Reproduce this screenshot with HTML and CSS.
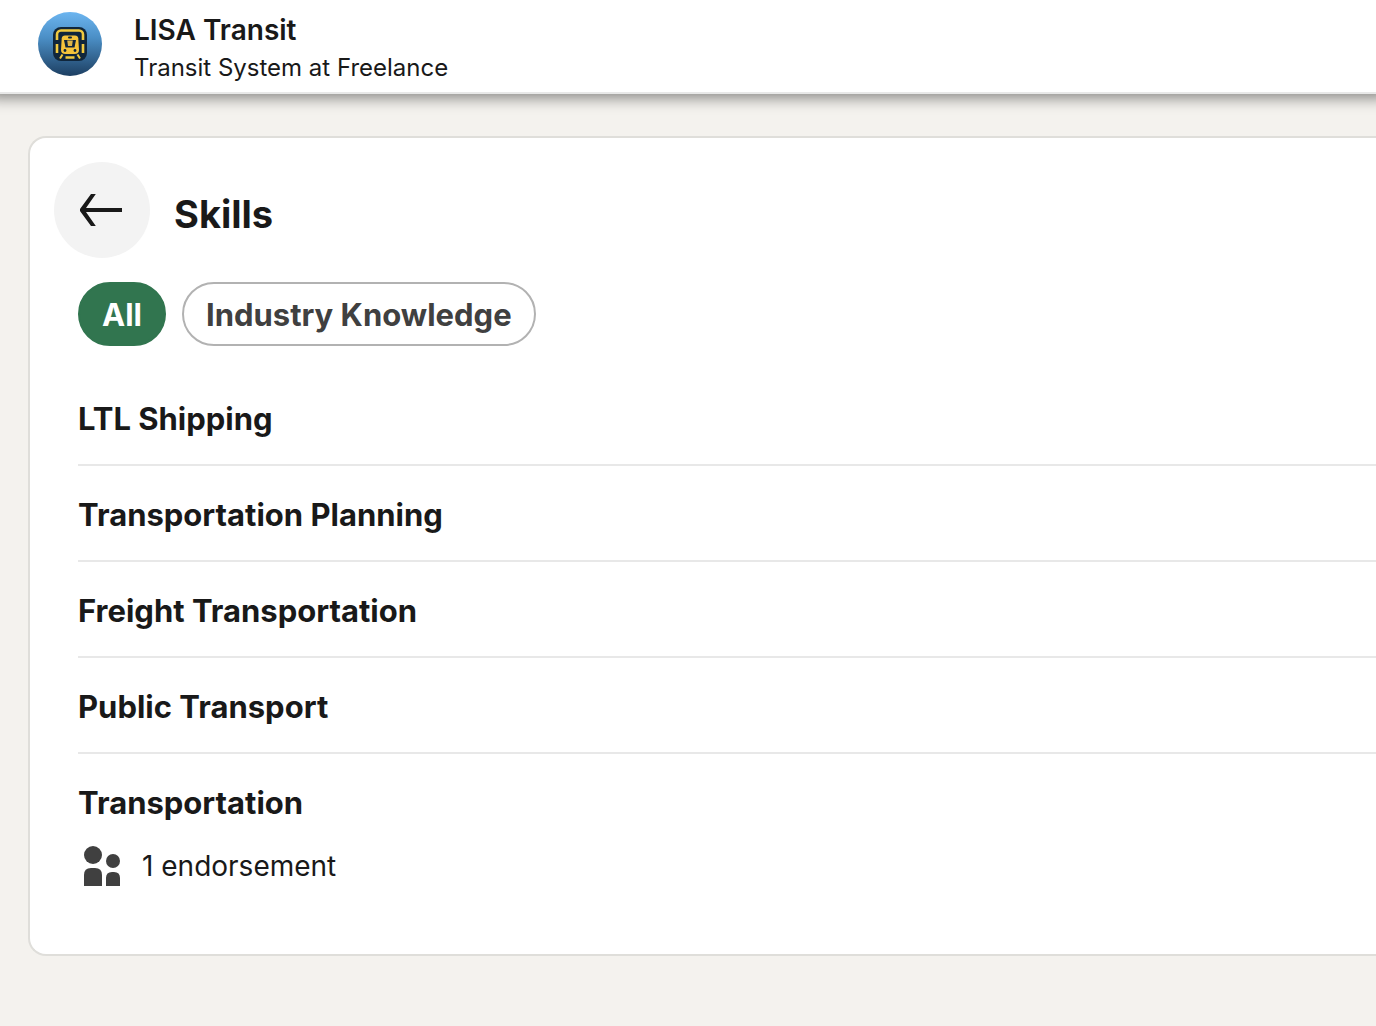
FILE: index.html
```html
<!DOCTYPE html>
<html lang="en">
<head>
<meta charset="utf-8">
<meta name="viewport" content="width=device-width, initial-scale=1">
<title>Skills | LISA Transit</title>
<link rel="stylesheet" href="styles.css">
</head>
<body>
<header class="profile-bar">
  <svg class="avatar" viewBox="0 0 64 64" role="img" aria-label="LISA Transit">
    <defs>
      <linearGradient id="sky" x1="0" y1="0" x2="0" y2="1">
        <stop offset="0" stop-color="#6cb5f0"/>
        <stop offset="0.4" stop-color="#4b8fc6"/>
        <stop offset="1" stop-color="#1d3f62"/>
      </linearGradient>
    </defs>
    <circle cx="32" cy="32" r="32" fill="url(#sky)"/>
    <rect x="15" y="15" width="34" height="34" rx="8" fill="#10263b"/>
    <g fill="none" stroke="#f0ca40" stroke-width="2.600">
      <path d="M19 28v-5.500a4 4 0 0 1 4-4h18a4 4 0 0 1 4 4V28M19 32v9M45 32v9M27.500 45.500h9"/>
      <path d="M24.500 42.500l-2.500 4M39.500 42.500l2.500 4" stroke-width="2"/>
    </g>
    <path d="M27 23.500h10q3 0 3.300 3l.7 11.500q0 4-4.500 4h-9q-4.500 0-4.500-4l.7-11.500q.3-3 3.300-3z" fill="#f5c43a"/>
    <rect x="30" y="24.500" width="4" height="2" rx="1" fill="#10263b"/>
    <path d="M26 28h12l-1.500 7.500h-9z" fill="#10263b"/>
    <path d="M29.200 28.500h5.600l-.8 5.500h-4z" fill="#dcb548"/>
    <circle cx="27" cy="38.500" r="1.400" fill="#10263b"/>
    <circle cx="37" cy="38.500" r="1.400" fill="#10263b"/>
  </svg>
  <div>
    <p class="profile-name">LISA Transit</p>
    <p class="profile-headline">Transit System at Freelance</p>
  </div>
</header>
<main class="page">
  <section class="card">
    <div class="card-head">
      <button class="back" type="button" aria-label="Back">
        <svg width="48" height="48" viewBox="0 0 48 48" fill="#191919" aria-hidden="true"><path d="M44 22v4H8l9.800 14H13L2 25v-2L13 8h4.800L8 22z"/></svg>
      </button>
      <h1 class="title">Skills</h1>
    </div>
    <div class="filters">
      <button class="pill pill-active" type="button" aria-pressed="true">All</button>
      <button class="pill" type="button" aria-pressed="false">Industry Knowledge</button>
    </div>
    <ul class="skills">
      <li class="skill"><h2 class="skill-name">LTL Shipping</h2></li>
      <li class="skill"><h2 class="skill-name">Transportation Planning</h2></li>
      <li class="skill"><h2 class="skill-name">Freight Transportation</h2></li>
      <li class="skill"><h2 class="skill-name">Public Transport</h2></li>
      <li class="skill">
        <h2 class="skill-name">Transportation</h2>
        <p class="endorsement">
          <svg width="48" height="48" viewBox="0 0 48 48" fill="#404040" aria-hidden="true"><circle cx="15" cy="13" r="9"/><circle cx="35" cy="19" r="7"/><path d="M6 44V33q0-7 7-7h4q7 0 7 7v11zM28 44v-8q0-6 6-6h2q6 0 6 6v8z"/></svg>
          <span>1 endorsement</span>
        </p>
      </li>
    </ul>
  </section>
</main>
</body>
</html>
```
FILE: styles.css
```css
* { box-sizing: border-box; }

body {
  margin: 0;
  background: #f4f2ee;
  color: #191919;
  font-family: Inter, "Liberation Sans", sans-serif;
}

h1, h2, p, ul { margin: 0; padding: 0; }

.profile-bar {
  display: flex;
  align-items: flex-start;
  gap: 32px;
  padding: 12px 38px 4px;
  background: #fff;
  border-bottom: 2px solid #e8e8e8;
  box-shadow: 0 -8px 14px 12px rgba(0, 0, 0, 0.45);
}

.avatar { width: 64px; height: 64px; flex: none; }

.profile-name { font-size: 28px; line-height: 36px; font-weight: 600; }
.profile-headline { font-size: 24px; line-height: 40px; }

.page { padding: 42px 0 70px 28px; }

.card {
  padding: 24px 0 42px 24px;
  background: #fff;
  border: 2px solid #dfdeda;
  border-right: 0;
  border-radius: 18px 0 0 18px;
}

.card-head { display: flex; align-items: center; gap: 24px; }

.back {
  display: flex;
  align-items: center;
  justify-content: center;
  width: 96px;
  height: 96px;
  padding: 0;
  border: 0;
  border-radius: 50%;
  background: #f3f3f3;
}

.title { padding-top: 8px; font-size: 38px; line-height: 48px; font-weight: 650; }

.filters { display: flex; gap: 16px; padding: 24px 24px 0; }

.pill {
  height: 64px;
  padding: 2px 22px 0;
  border: 2px solid #b2b2b2;
  border-radius: 32px;
  background: #fff;
  color: #404040;
  font: 650 31px/40px Inter, "Liberation Sans", sans-serif;
}

.pill-active { background: #31754f; border-color: #31754f; color: #fff; }

.skills { padding: 24px 0 0 24px; list-style: none; }
.skill { padding: 26px 0 22px; border-bottom: 2px solid #e8e8e8; }
.skill:last-child { border-bottom: 0; }
.skill-name { font-size: 31px; line-height: 46px; font-weight: 650; }

.endorsement {
  display: flex;
  align-items: center;
  gap: 16px;
  padding-top: 16px;
  font-size: 28px;
  line-height: 40px;
}
```
